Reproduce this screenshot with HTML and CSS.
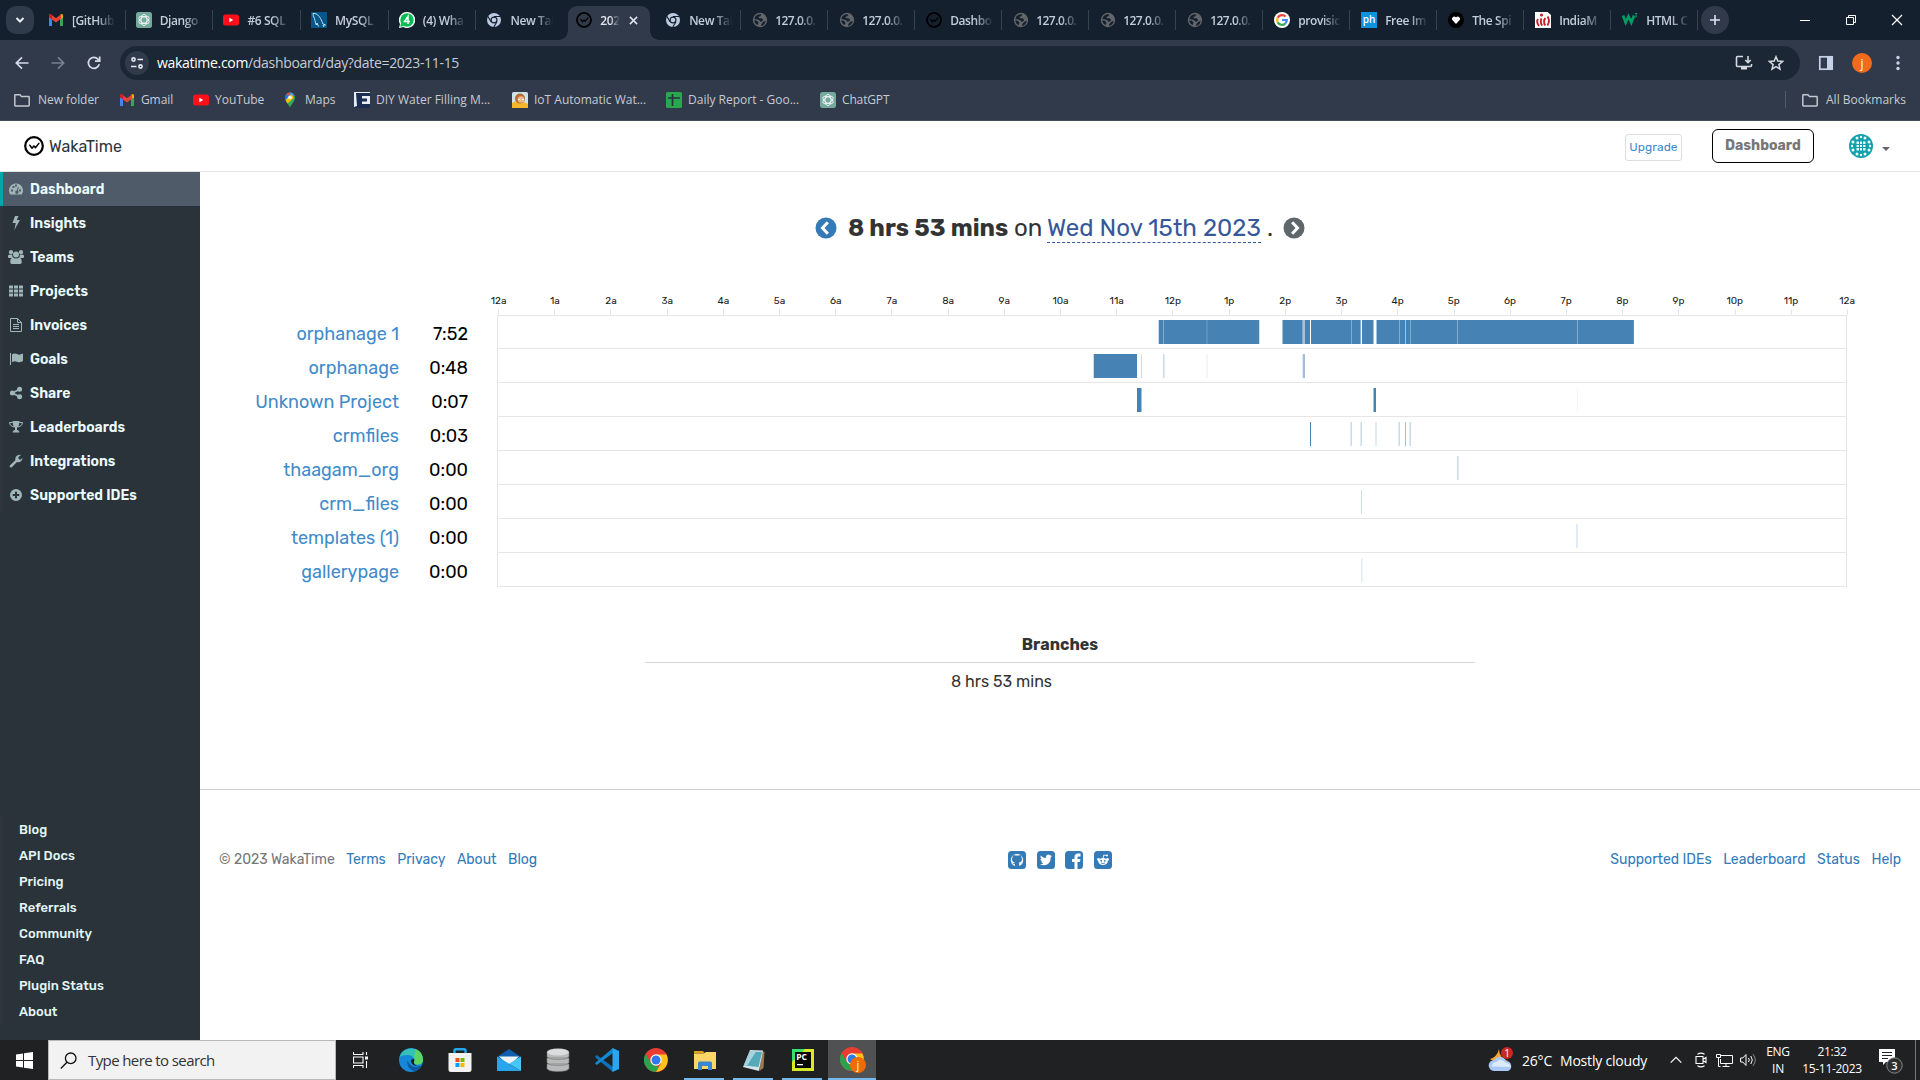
FILE: index.html
```html
<!DOCTYPE html>
<html lang="en">
<head>
<meta charset="utf-8">
<title>2023-11-15 - WakaTime</title>
<link rel="stylesheet" href="styles.css">
</head>
<body>
<svg class="defs" width="0" height="0" aria-hidden="true">
  <symbol id="gmail" viewBox="0 0 16 16"><path fill="#4285f4" d="M1 14V4l3 2.2V14z"/><path fill="#34a853" d="M12 14V6.2L15 4v10z"/><path fill="#fbbc04" d="M12 3l1.2-.8Q15 1.600 15 4v1.200L12 7.500z"/><path fill="#ea4335" d="M1 5.200V4Q1 1.600 2.800 2.200L8 6.200l5.200-4V6.600L8 10.600z"/><path fill="#c5221f" d="M1 5.200V4Q1 1.600 2.800 2.200L4 3v4.500z"/></symbol>
  <symbol id="gpt" viewBox="0 0 16 16"><rect width="16" height="16" rx="2.500" fill="#75a99c"/><g fill="none" stroke="#fff" stroke-width=".8"><ellipse cx="8" cy="8" rx="3" ry="5.600"/><ellipse cx="8" cy="8" rx="3" ry="5.600" transform="rotate(60 8 8)"/><ellipse cx="8" cy="8" rx="3" ry="5.600" transform="rotate(120 8 8)"/></g></symbol>
  <symbol id="youtube" viewBox="0 0 16 16"><rect y="2.500" width="16" height="11" rx="2.500" fill="#ff0f1a"/><path fill="#fff" d="M6.300 5.700v4.600L10.300 8z"/></symbol>
  <symbol id="mysql" viewBox="0 0 16 16"><path fill="#05578a" d="M0 0h16v16H0z"/><path fill="none" stroke="#d9edf5" stroke-width=".9" d="M2 1.500c3-.5 5.500 1.500 7.500 5 1.200 2 1.800 3.500 2 5l3 1.500-2.600.2 1.200 1.800M2 1.500c0 3 1.500 4 2 7 .4 2 .6 3 1.300 4.500l.7-2 1.500 3.500"/></symbol>
  <symbol id="whatsapp" viewBox="0 0 16 16"><path fill="#fff" d="M8 0a8 8 0 1 1-3.700 15L0 16l1-4A8 8 0 0 1 8 0z"/><circle cx="8" cy="8" r="6.700" fill="#00bd53"/><path d="M2 11l-.7 3.700L5 14z" fill="#00bd53"/><path fill="none" stroke="#fff" stroke-width="1.500" d="M9 12V4.500L5.500 9.500h5.500"/></symbol>
  <symbol id="newtab" viewBox="0 0 16 16"><circle cx="8" cy="8" r="7" fill="#bccbe3"/><circle cx="8" cy="8" r="3.500" fill="#15202e"/><circle cx="8" cy="8" r="2.300" fill="#bccbe3"/><path d="M8 4.500h6.500M5 9.600L1.800 4.200M11 9.700L7.800 15" stroke="#15202e" stroke-width="1.100"/></symbol>
  <symbol id="waka" viewBox="0 0 20 20"><circle cx="10" cy="10" r="8.800" fill="none" stroke="#000" stroke-width="2.200"/><path d="M5.800 9.200l2.300 3 1.800-2.300 1.500 1.900 3.500-4.400" fill="none" stroke="#000" stroke-width="1.500" stroke-linecap="round" stroke-linejoin="round"/></symbol>
  <symbol id="globe" viewBox="0 0 16 16"><circle cx="8" cy="8" r="7.200" fill="#62656a"/><path fill="#15202e" d="M3.500 4.300Q6 1.500 9.500 2.600L8.300 4.200l-1.800.6.300 1.500 2.900-.1 1.500 1.700-1.400 1.500-1.500.4-.9-1.600L5.200 7.500 2.300 7zM9.300 12.300l1.700-2.300 2.600-1.200c0 2.600-2 4.900-4.500 5.100zM2.300 8.300l2.500.5 1.700 1.700-.8 2.500C3.700 12.400 2.400 10.800 2.300 8.300z"/></symbol>
  <symbol id="google" viewBox="0 0 16 16"><circle cx="8" cy="8" r="8" fill="#fff"/><g fill="none" stroke-width="2.200"><path stroke="#ea4335" d="M11.600 4.600A4.900 4.900 0 0 0 3.700 5.700"/><path stroke="#fbbc05" d="M3.700 5.700a4.900 4.900 0 0 0 0 4.700"/><path stroke="#34a853" d="M3.700 10.400a4.900 4.900 0 0 0 7.500 1.200"/><path stroke="#4285f4" d="M11.200 11.600A4.900 4.900 0 0 0 12.800 8H8"/></g></symbol>
  <symbol id="ph" viewBox="0 0 16 16"><path fill="#0d92e0" d="M0 0h16v16H0z"/><text x="8" y="10.500" text-anchor="middle" class="ph-text">ph</text></symbol>
  <symbol id="heart" viewBox="0 0 16 16"><circle cx="8" cy="8" r="8" fill="#000"/><path fill="#fff" d="M8 12L4.300 8A2.200 2.200 0 0 1 8 5.500 2.200 2.200 0 0 1 11.700 8z"/></symbol>
  <symbol id="indiamart" viewBox="0 0 16 16"><path fill="#fff" d="M0 0h12.500L16 3v13H0z"/><circle cx="6.500" cy="3" r="1.600" fill="#c7202c"/><path d="M4 13.800Q.9 10 3 7M7.200 13.500Q4.800 10 6.500 6.500M10.200 13.500Q8 10 10.200 6M12.400 13.500q3-4.500.2-9" fill="none" stroke="#c7202c" stroke-width="1.900"/></symbol>
  <symbol id="w3" viewBox="0 0 16 16"><path fill="none" stroke="#059b65" stroke-width="2.700" d="M1 3.500l2.700 7 2.800-6 2.800 6 2.700-7"/><path d="M12.800 1.500h2.200l-1.200 1.700q2.400 1.600-.8 2.300" fill="none" stroke="#059b65"/></symbol>
  <symbol id="folder" viewBox="0 0 16 16"><path fill="none" stroke="#c3c7ce" stroke-width="1.500" d="M.8 13.200V3.200Q.8 2.700 1.400 2.700H6L7.500 4.600h7q.7 0 .7.700v7.900q0 .7-.7.700H1.500q-.7 0-.7-.7z"/></symbol>
  <symbol id="chrome" viewBox="0 0 24 24"><circle cx="12" cy="12" r="12" fill="#ea3d31"/><path fill="#2ba24c" d="M1.600 6L6.800 15 12 18l2.500.5L12 24A12 12 0 0 1 1.600 6z"/><path fill="#fcc31e" d="M22.400 6.500H12l5.200 8.500L12 24A12 12 0 0 0 22.400 6.500z"/><circle cx="12" cy="12" r="5.700" fill="#fff"/><circle cx="12" cy="12" r="4.500" fill="#3079ea"/></symbol>
</svg>

<div class="browser">
  <div class="tabs">
    <button class="tab-search"><svg width="14" height="14" viewBox="0 0 14 14"><path d="M3.500 5L7 8.500 10.500 5" fill="none" stroke="#e6ebf3" stroke-width="2"/></svg></button>
    <div class="tab tab-wide"><svg class="fav"><use href="#gmail"/></svg><span>[GitHub</span></div>
    <div class="tab tab-wide"><svg class="fav"><use href="#gpt"/></svg><span>Django</span></div>
    <div class="tab tab-wide"><svg class="fav"><use href="#youtube"/></svg><span>#6 SQL</span></div>
    <div class="tab tab-wide"><svg class="fav"><use href="#mysql"/></svg><span>MySQL</span></div>
    <div class="tab tab-wide"><svg class="fav"><use href="#whatsapp"/></svg><span>(4) Wha</span></div>
    <div class="tab tab-wide tab-before"><svg class="fav"><use href="#newtab"/></svg><span>New Tal</span></div>
    <div class="tab-active"><svg class="fav"><use href="#waka"/></svg><span>202</span><svg class="tab-close" viewBox="0 0 10 10"><path d="M1 1l8 8M9 1L1 9" stroke="#dfe5ef" stroke-width="1.700"/></svg></div>
    <div class="tab"><svg class="fav"><use href="#newtab"/></svg><span>New Tal</span></div>
    <div class="tab"><svg class="fav"><use href="#globe"/></svg><span class="ip">127.0.0.</span></div>
    <div class="tab"><svg class="fav"><use href="#globe"/></svg><span class="ip">127.0.0.</span></div>
    <div class="tab"><svg class="fav"><use href="#waka"/></svg><span>Dashbo</span></div>
    <div class="tab"><svg class="fav"><use href="#globe"/></svg><span class="ip">127.0.0.</span></div>
    <div class="tab"><svg class="fav"><use href="#globe"/></svg><span class="ip">127.0.0.</span></div>
    <div class="tab"><svg class="fav"><use href="#globe"/></svg><span class="ip">127.0.0.</span></div>
    <div class="tab"><svg class="fav"><use href="#google"/></svg><span>provisic</span></div>
    <div class="tab"><svg class="fav"><use href="#ph"/></svg><span>Free Im</span></div>
    <div class="tab"><svg class="fav"><use href="#heart"/></svg><span>The Spi</span></div>
    <div class="tab"><svg class="fav"><use href="#indiamart"/></svg><span>IndiaM</span></div>
    <div class="tab"><svg class="fav"><use href="#w3"/></svg><span>HTML C</span></div>
    <button class="new-tab"><svg width="12" height="12" viewBox="0 0 12 12"><path d="M6 1v10M1 6h10" stroke="#dfe5ef" stroke-width="1.600"/></svg></button>
    <div class="window-controls">
      <svg width="12" height="12" viewBox="0 0 12 12"><path d="M1 6.500h10" stroke="#fff"/></svg>
      <svg width="12" height="12" viewBox="0 0 12 12"><path d="M1.500 3.500h7v7h-7zM3.500 3.500v-2h7v7h-2" fill="none" stroke="#fff"/></svg>
      <svg width="12" height="12" viewBox="0 0 12 12"><path d="M1 1l10 10M11 1L1 11" stroke="#fff" stroke-width="1.200"/></svg>
    </div>
  </div>

  <div class="toolbar">
    <div class="nav-buttons">
      <svg width="16" height="16" viewBox="0 0 16 16"><path d="M14.500 8H2.500M8 2.300L2.300 8 8 13.700" fill="none" stroke="#d5dce8" stroke-width="1.700"/></svg>
      <svg width="16" height="16" viewBox="0 0 16 16"><path d="M1.500 8h12M8 2.300L13.700 8 8 13.700" fill="none" stroke="#76808e" stroke-width="1.700"/></svg>
      <svg width="16" height="16" viewBox="0 0 16 16"><path d="M13.200 9.300A5.500 5.500 0 1 1 12 4.200l1.500 1.600M13.700 1.500v4.700H9" fill="none" stroke="#d5dce8" stroke-width="1.700"/></svg>
    </div>
    <div class="omnibox">
      <span class="site-info"><svg width="14" height="14" viewBox="0 0 14 14"><g fill="none" stroke="#e4e9f1" stroke-width="1.600"><circle cx="3.500" cy="3.500" r="1.600"/><path d="M7.500 3.500H13M1 10.500h5.500"/><circle cx="10.500" cy="10.500" r="1.600"/></g></svg></span>
      <span class="url"><b>wakatime.com</b>/dashboard/day?date=2023-11-15</span>
      <svg class="install" width="18" height="16" viewBox="0 0 18 16"><path d="M8 1.500H2.500q-1 0-1 1v8q0 1 1 1h13q1 0 1-1V9M13 1v6M10.300 5L13 7.700 15.700 5" fill="none" stroke="#d5dae2" stroke-width="1.600"/><path d="M6 12h6v2.500H6z" fill="#d5dae2"/></svg>
      <svg class="star" width="16" height="16" viewBox="0 0 16 16"><path d="M8 1.800l1.800 4.300 4.700.4-3.600 3.100 1.100 4.500L8 11.700l-4 2.400 1.100-4.500L1.500 6.500l4.700-.4z" fill="none" stroke="#d5dae2" stroke-width="1.500"/></svg>
    </div>
    <div class="tools">
      <svg width="16" height="16" viewBox="0 0 16 16"><rect x="1.800" y="1.800" width="12.400" height="12.400" fill="none" stroke="#c5d3e8" stroke-width="1.700"/><path fill="#c5d3e8" d="M9 1.800h5.200v12.400H9z"/></svg>
      <span class="profile">j</span>
      <svg class="more" width="4" height="16" viewBox="0 0 4 16"><g fill="#c9d4e6"><circle cx="2" cy="2.500" r="1.700"/><circle cx="2" cy="8" r="1.700"/><circle cx="2" cy="13.500" r="1.700"/></g></svg>
    </div>
  </div>

  <div class="bookmarks">
    <span class="bm bm-newfolder"><svg class="fav"><use href="#folder"/></svg>New folder</span>
    <span class="bm bm-gmail"><svg class="fav"><use href="#gmail"/></svg>Gmail</span>
    <span class="bm bm-youtube"><svg class="fav"><use href="#youtube"/></svg>YouTube</span>
    <span class="bm bm-maps"><svg class="fav" viewBox="0 0 16 16"><path fill="#34a853" d="M8 16C7.500 13 3 9.500 3 5.500a5 5 0 0 1 10 0C13 9.500 8.500 13 8 16z"/><path fill="#4285f4" d="M8 .5a5 5 0 0 1 4.600 3L6 11 3 6z"/><path fill="#ea4335" d="M3.800 2.500A5 5 0 0 1 8 .5L6 4z"/><path fill="#fbbc04" d="M3.500 8l6-6L12 6 5.500 11.500z"/><path fill="#1a73e8" d="M3.800 2.500A5 5 0 0 0 3.500 8L6 4z"/><circle cx="8" cy="5.500" r="1.800" fill="#fff"/></svg>Maps</span>
    <span class="bm bm-diy"><svg class="fav" viewBox="0 0 16 16"><path fill="#e9edf4" d="M0 0h16v16H0z"/><path fill="#1b2d52" d="M2 1h14v3H8v2.500h5v3H8V12h8v4H0v-1l3-1z"/></svg>DIY Water Filling M...</span>
    <span class="bm bm-iot"><svg class="fav" viewBox="0 0 16 16"><rect width="16" height="16" rx="1.500" fill="#cfe4ea"/><path fill="#f6b62c" d="M0 16V11l4-2 8 1 4 2v4z"/><circle cx="8" cy="6.500" r="5" fill="#b46b32"/><circle cx="9" cy="7.500" r="3.300" fill="#efb98a"/><path fill="#fff" d="M6 7h2v1H6zM10 7h2v1h-2z"/></svg>IoT Automatic Wat...</span>
    <span class="bm bm-daily"><svg class="fav" viewBox="0 0 16 16"><rect width="16" height="16" rx="1.500" fill="#29a84e"/><path d="M2 6h12M6.500 2v12" stroke="#26313c" stroke-width="1.700"/></svg>Daily Report - Goo...</span>
    <span class="bm bm-gpt"><svg class="fav"><use href="#gpt"/></svg>ChatGPT</span>
    <span class="bm bm-all"><svg class="fav"><use href="#folder"/></svg>All Bookmarks</span>
  </div>
</div>

<header class="site-header">
  <a class="brand"><svg width="20" height="20"><use href="#waka"/></svg><span>WakaTime</span></a>
  <a class="upgrade">Upgrade</a>
  <a class="dash-button">Dashboard</a>
  <svg class="avatar" width="24" height="24" viewBox="0 0 24 24"><circle cx="12" cy="12" r="12" fill="#12a0ad"/><g fill="#e8fbfa"><path d="M7.500 7.500h2.500V10H7.500zM11 7.500h2V10h-2zM14 7.500h2.500V10H14zM7.500 11h2.500v2H7.500zM11 11h2v2h-2zM14 11h2.500v2H14zM7.500 14h2.500v2.500H7.500zM11 14h2v2.500h-2zM14 14h2.500v2.500H14z"/><circle cx="8" cy="4" r="1.500"/><circle cx="12" cy="3" r="1.200"/><circle cx="16" cy="4" r="1.500"/><circle cx="8" cy="20" r="1.500"/><circle cx="12" cy="21" r="1.200"/><circle cx="16" cy="20" r="1.500"/><circle cx="4" cy="8" r="1.500"/><circle cx="3" cy="12" r="1.200"/><circle cx="4" cy="16" r="1.500"/><circle cx="20" cy="8" r="1.500"/><circle cx="21" cy="12" r="1.200"/><circle cx="20" cy="16" r="1.500"/></g></svg>
  <svg class="caret" width="8" height="4" viewBox="0 0 8 4"><path fill="#666" d="M0 0h8L4 4z"/></svg>
</header>

<div class="page">
  <aside class="sidebar">
    <nav class="menu">
      <a class="current"><svg viewBox="0 0 14 14"><path fill-rule="evenodd" d="M7 1.500A7 7 0 0 0 1.100 12.200q.2.300.5.300h10.800q.3 0 .5-.3A7 7 0 0 0 7 1.500zM2 7.500h2v2H2zm1.500-3.500h2v2h-2zM6 2.500h2v2H6zM8.800 5l1 .3-1 3.500a1.600 1.600 0 1 1-1-.3zM10 7.500h2v2h-2z"/></svg><span>Dashboard</span></a>
      <a><svg viewBox="0 0 14 14"><path d="M6 0h3.500L7.800 4H11L5.300 14 6.800 7H3.500z"/></svg><span>Insights</span></a>
      <a><svg class="wide" viewBox="0 0 16 14"><circle cx="3" cy="2.200" r="2.100"/><circle cx="13" cy="2.200" r="2.100"/><circle cx="8" cy="4.500" r="3"/><path d="M0 5.500q1-1.500 4.300-.8-.3 2 .8 3.300H1Q0 8 0 7zM16 5.500q-1-1.500-4.300-.8.3 2-.8 3.300H15q1 0 1-1zM2.300 12.500Q2 8 5 7.500q3 2 6 0 3 .5 2.700 5 0 1.500-1.700 1.500H4q-1.700 0-1.700-1.500z"/></svg><span>Teams</span></a>
      <a><svg viewBox="0 0 14 14"><path d="M0 1.500h4v3H0zM5 1.500h4v3H5zM10 1.500h4v3h-4zM0 5.500h4v3H0zM5 5.500h4v3H5zM10 5.500h4v3h-4zM0 9.500h4v3H0zM5 9.500h4v3H5zM10 9.500h4v3h-4z"/></svg><span>Projects</span></a>
      <a><svg viewBox="0 0 14 14"><path class="line" d="M1.500.5h7l4 4v9h-11zM8.500.5v4h4M4 6.500h6M4 8.500h6M4 10.500h6"/></svg><span>Invoices</span></a>
      <a><svg viewBox="0 0 14 14"><path d="M1 1h1v12H1zM3 2.500q2.500-1.700 5-.4 2.500 1.300 6-.6v7.500q-3.500 2-6 .7-2.500-1.300-5 .6z"/></svg><span>Goals</span></a>
      <a><svg viewBox="0 0 14 14"><circle cx="3.400" cy="7" r="2.500"/><circle cx="10.600" cy="3.300" r="2.500"/><circle cx="10.600" cy="10.700" r="2.500"/><path class="line thick" d="M10.600 3.300L3.400 7l7.200 3.700"/></svg><span>Share</span></a>
      <a><svg viewBox="0 0 14 14"><path d="M3.500 1h7q0 5-2.500 6.800V10q2.500.3 2.500 2.500h-7Q3.500 10.300 6 10V7.800Q3.500 6 3.500 1z"/><path class="line" d="M3.500 2.500h-3Q.7 6 5 7M10.500 2.500h3Q13.300 6 9 7"/></svg><span>Leaderboards</span></a>
      <a><svg viewBox="0 0 14 14"><path d="M.8 11.500L6.300 6.200Q5.900 3 8.500 1.300 10.200.4 12 1L9.500 3v1.800l1.700.9 2.300-1.600Q13.500 6 12 7.300q-1.700 1.300-4 .7L2.800 13.300q-.9.600-1.700-.1-.8-.9-.3-1.700z"/></svg><span>Integrations</span></a>
      <a><svg viewBox="0 0 14 14"><path fill-rule="evenodd" d="M7 1a6 6 0 1 0 0 12A6 6 0 0 0 7 1zM6 3.700h2V6h2.300v2H8v2.300H6V8H3.700V6H6z"/></svg><span>Supported IDEs</span></a>
    </nav>
    <nav class="links">
      <a>Blog</a><a>API Docs</a><a>Pricing</a><a>Referrals</a><a>Community</a><a>FAQ</a><a>Plugin Status</a><a>About</a>
    </nav>
  </aside>

  <main class="content">
    <h1 class="day">
      <svg class="step" viewBox="0 0 22 22"><circle cx="11" cy="11" r="10.500" fill="#337ab7"/><path d="M12.800 5.300L7.500 11l5.300 5.700" fill="none" stroke="#fff" stroke-width="3"/></svg>
      <strong>8 hrs 53 mins</strong><span class="on">on</span><a class="date">Wed Nov 15th 2023</a><span class="dot">.</span>
      <svg class="step" viewBox="0 0 22 22"><circle cx="11" cy="11" r="10.500" fill="#60676b"/><path d="M9.200 5.300L14.500 11l-5.300 5.700" fill="none" stroke="#fff" stroke-width="3"/></svg>
    </h1>

    <section class="timeline">
      <div class="projects">
        <div><a>orphanage 1</a><span>7:52</span></div>
        <div><a>orphanage</a><span>0:48</span></div>
        <div><a>Unknown Project</a><span>0:07</span></div>
        <div><a>crmfiles</a><span>0:03</span></div>
        <div><a>thaagam_org</a><span>0:00</span></div>
        <div><a>crm_files</a><span>0:00</span></div>
        <div><a>templates (1)</a><span>0:00</span></div>
        <div><a>gallerypage</a><span>0:00</span></div>
      </div>
      <div class="chart">
        <div class="hours"><span>12a</span><span>1a</span><span>2a</span><span>3a</span><span>4a</span><span>5a</span><span>6a</span><span>7a</span><span>8a</span><span>9a</span><span>10a</span><span>11a</span><span>12p</span><span>1p</span><span>2p</span><span>3p</span><span>4p</span><span>5p</span><span>6p</span><span>7p</span><span>8p</span><span>9p</span><span>10p</span><span>11p</span><span>12a</span></div>
        <svg class="plot" width="1351" height="278" viewBox="497 309 1351 278" shape-rendering="crispEdges">
          <g fill="#e6e6e6">
            <path d="M497 315h1350v1H497zM497 348h1350v1H497zM497 382h1350v1H497zM497 416h1350v1H497zM497 450h1350v1H497zM497 484h1350v1H497zM497 518h1350v1H497zM497 552h1350v1H497zM497 586h1350v1H497zM497 315h1v272h-1zM1846 315h1v272h-1z"/>
            <path d="M498 309h1v6h-1zM554 309h1v6h-1zM610 309h1v6h-1zM667 309h1v6h-1zM723 309h1v6h-1zM779 309h1v6h-1zM835 309h1v6h-1zM891 309h1v6h-1zM948 309h1v6h-1zM1004 309h1v6h-1zM1060 309h1v6h-1zM1116 309h1v6h-1zM1172 309h1v6h-1zM1229 309h1v6h-1zM1285 309h1v6h-1zM1341 309h1v6h-1zM1397 309h1v6h-1zM1454 309h1v6h-1zM1510 309h1v6h-1zM1566 309h1v6h-1zM1622 309h1v6h-1zM1678 309h1v6h-1zM1735 309h1v6h-1zM1791 309h1v6h-1zM1847 309h1v6h-1z"/>
          </g>
          <g fill="#4682b4">
            <path d="M1159 320h100v24h-100zM1283 320h351v24h-351zM1094 354h43v24h-43zM1137 388h4v24h-4zM1374 388h2v24h-2zM1310 422h1v24h-1z"/>
            <path opacity=".5" d="M1282 320h1v24h-1zM1303 354h2v24h-2zM1141 388h1v24h-1zM1373 388h1v24h-1zM1405 422h1v24h-1z"/>
            <path opacity=".28" d="M1259 320h1v24h-1zM1158 320h1v24h-1zM1093 354h1v24h-1zM1141 354h1v24h-1zM1163 354h1v24h-1zM1351 422h1v24h-1zM1361 422h1v24h-1zM1399 422h1v24h-1zM1410 422h1v24h-1zM1457 456h1v24h-1zM1361 490h1v24h-1z"/>
            <path opacity=".16" d="M1302 354h1v24h-1zM1164 354h1v24h-1zM1350 422h1v24h-1zM1360 422h1v24h-1zM1375 422h2v24h-2zM1398 422h1v24h-1zM1409 422h1v24h-1zM1458 456h1v24h-1zM1576 524h2v24h-2zM1361 558h1v24h-1z"/>
            <path opacity=".07" d="M1206 354h2v24h-2zM1577 388h1v24h-1zM1362 558h1v24h-1z"/>
          </g>
          <g fill="#fff">
            <path d="M1310 320h1v24h-1zM1361 320h1v24h-1zM1374 320h2v24h-2z"/>
            <path opacity=".5" d="M1303 320h2v24h-2zM1373 320h1v24h-1zM1376 320h1v24h-1zM1405 320h1v24h-1z"/>
            <path opacity=".33" d="M1163 320h1v24h-1zM1302 320h1v24h-1zM1351 320h1v24h-1zM1360 320h1v24h-1zM1399 320h1v24h-1zM1410 320h1v24h-1zM1457 320h1v24h-1zM1577 320h1v24h-1z"/>
            <path opacity=".12" d="M1206 320h2v24h-2zM1633 320h1v24h-1z"/>
          </g>
        </svg>
      </div>
    </section>

    <section class="branches">
      <h2>Branches</h2>
      <p>8 hrs 53 mins</p>
    </section>

    <footer class="footer">
      <div class="foot-left"><span>© 2023 WakaTime</span><a>Terms</a><a>Privacy</a><a>About</a><a>Blog</a></div>
      <div class="social">
        <svg viewBox="0 0 18 18"><rect width="18" height="18" rx="3.500"/><path fill="#fff" d="M7 15v-2q-2 .3-2.500-1.500 1.500 1.200 2.700.3Q4 11 4 8.200q0-1.200.8-2.200-.3-1.200.2-2.200 1 0 2.200.8 1.800-.4 3.600 0Q12 3.800 13 3.800q.5 1 .2 2.200.8 1 .8 2.200 0 2.800-3.200 3.600.5.600.4 1.400V15q4-1.700 4-6A6.200 6.200 0 1 0 7 15z"/></svg>
        <svg viewBox="0 0 18 18"><rect width="18" height="18" rx="3.500"/><path fill="#fff" d="M15 5.300l-1.300 1.200Q13.500 14 7 14.300q-2.300 0-4-1 2.200 0 3.500-1-1.800-.2-2.300-1.800h1.100Q3.300 9.800 3.400 7.700l1.100.3Q2.800 6.500 3.800 4.500q2.300 2.500 5.100 2.600-.4-2.900 2.200-3.500 1.100-.1 2 .8l1.500-.6-.9 1.400z"/></svg>
        <svg viewBox="0 0 18 18"><rect width="18" height="18" rx="3.500"/><path fill="#fff" d="M9.500 18v-7H7V8h2.500V6q0-3.500 3.500-3.500h2.500v3H14q-1.500 0-1.500 1.200V8h2.900l-.4 3h-2.500v7z"/></svg>
        <svg viewBox="0 0 18 18"><rect width="18" height="18" rx="3.500"/><ellipse cx="9" cy="10.500" rx="4.700" ry="3.500" fill="#fff"/><circle cx="4.500" cy="8.500" r="1.400" fill="#fff"/><circle cx="13.500" cy="8.500" r="1.400" fill="#fff"/><path d="M9 7.200L9.800 4l3 .6" fill="none" stroke="#fff" stroke-width=".9"/><circle cx="13" cy="4.600" r="1" fill="#fff"/><circle cx="7.200" cy="9.800" r=".9"/><circle cx="10.800" cy="9.800" r=".9"/><path d="M7 12q2 1.200 4 0" class="smile"/></svg>
      </div>
      <div class="foot-right"><a>Supported IDEs</a><a>Leaderboard</a><a>Status</a><a>Help</a></div>
    </footer>
  </main>
</div>

<div class="taskbar">
  <div class="start"><svg width="17" height="17" viewBox="0 0 17 17"><path fill="#fff" d="M0 2.400l7-1V8H0zM8 1.200L17 0v8H8zM0 9h7v6.600l-7-1zM8 9h9v8l-9-1.200z"/></svg></div>
  <div class="search"><svg width="17" height="17" viewBox="0 0 17 17"><circle cx="10.700" cy="6.300" r="5.300" fill="none" stroke="#111" stroke-width="1.300"/><path d="M7 10.200L.8 16.400" stroke="#111" stroke-width="1.400"/></svg><span>Type here to search</span></div>
  <div class="apps">
    <div class="app"><svg width="16" height="16" viewBox="0 0 16 16"><path d="M.5 0v2.500h9.500V0M.5 5h9.500v6H.5zM.5 16v-2.500h9.500V16M13.500 0v3M13.500 9v7" fill="none" stroke="#fff" stroke-width="1.100"/><path fill="#fff" d="M12 4.500h3v3h-3z"/></svg></div>
    <div class="app"><svg width="24" height="24" viewBox="0 0 24 24"><circle cx="12" cy="12" r="12" fill="#1787d8"/><path fill="#35c1b5" d="M.5 9A12 12 0 0 1 24 12q-.5 5-6 4.500-3-.5-3-2.500Q16 8 10 7 4 6.500.5 9z"/><path fill="#5bd663" d="M16 .7A12 12 0 0 1 24 12q-.5 5-6 4.500-3-.5-3-2.500 2-3-.5-5.500Q17 5 16 .7z"/><path fill="#0c59a4" d="M8.500 12Q7 20 15 23.500q5-1.500 7-5.500-6 2.500-10-.5Q9 15 8.500 12z"/><path fill="#202122" d="M14.200 10.500q-3 1-2 4 2 4.500 10.200 3.500-6 .5-7.400-2.500-.5-1.700.5-3.500z"/></svg></div>
    <div class="app"><svg width="24" height="24" viewBox="0 0 24 24"><path d="M6.500 6V2.500q0-1.300 1.300-1.300h8.400q1.300 0 1.300 1.300V6" fill="none" stroke="#22a7ea" stroke-width="2.400"/><path fill="#f2f2f2" d="M.5 5h23v16.500q0 2.500-2.500 2.500H3Q.5 24 .5 21.500z"/><path fill="#f04e23" d="M7.500 10h4v4h-4z"/><path fill="#7eb900" d="M12.500 10h4v4h-4z"/><path fill="#00a3ee" d="M7.500 15h4v4h-4z"/><path fill="#ffb800" d="M12.500 15h4v4h-4z"/></svg></div>
    <div class="app"><svg width="24" height="24" viewBox="0 0 24 24"><path fill="#0f5eb0" d="M0 9L12 1l12 8v4H0z"/><path fill="#eef3f8" d="M2 8.500h20L14 16h-4z"/><path fill="#2aa4ea" d="M0 8.500L24 23H0z"/><path fill="#45c8f5" d="M24 8.500L12 15.700 24 23z"/></svg></div>
    <div class="app"><svg width="24" height="24" viewBox="0 0 24 24"><g fill="#b9b9b9" stroke="#777" stroke-width=".6"><path d="M1 16v4.500Q2 23.500 12 23.500t11-3V16zM1 10v4.500q1 3 11 3t11-3V10zM1 4v4.500q1 3 11 3t11-3V4z"/></g><ellipse cx="12" cy="4" rx="11" ry="3.500" fill="#dcdcdc"/></svg></div>
    <div class="app"><svg width="24" height="24" viewBox="0 0 24 24"><path fill="#0d72b9" d="M0 8.500l1.700-1.500L18 19v5L1.500 10.500z"/><path fill="#1389d2" d="M0 15.500L1.700 17 18 5V0L1.500 13.700z"/><path fill="#2ba5ee" d="M17.500 0L24 3v18l-6.500 3z"/></svg></div>
    <div class="app"><svg width="24" height="24"><use href="#chrome"/></svg></div>
    <div class="app open"><svg width="24" height="24" viewBox="0 0 24 24"><path fill="#e0a21b" d="M1 3h9l2 2.500H1z"/><path fill="#fbd568" d="M1 5.500h10L13 4h10v17H1z"/><path fill="#3588d5" d="M5 22v-7q0-1.500 1.500-1.500h11Q19 13.500 19 15v7h-4v-4H9v4z"/></svg></div>
    <div class="app open"><svg width="24" height="24" viewBox="0 0 24 24"><path fill="#9a7b4f" d="M20 3l2.500 1-1 16-4 3z"/><path fill="#d7e4e7" d="M8 2l13 .5L17 23 1 19z"/><path fill="#56a9b9" d="M8 3.500l12 .5-3.500 15L2 17.500z"/><path fill="#a4d5de" d="M8 3.500l6 .3-9 14L2 17.500z"/></svg></div>
    <div class="app open"><svg width="24" height="24" viewBox="0 0 24 24"><path fill="#d8ea26" d="M1 1h22v22H1z"/><path fill="#38e06b" d="M1 1h13L1 14z"/><path fill="#080808" d="M4 4h16v16H4z"/><text x="5.200" y="12" class="pc-text">PC</text><path fill="#fff" d="M6 16h6v1.300H6z"/></svg></div>
    <div class="app open focused"><svg width="28" height="26" viewBox="-2 0 28 26"><use href="#chrome" width="24" height="24"/><circle cx="18" cy="18" r="8" fill="#ef6c00"/><text x="18" y="22" text-anchor="middle" class="j-text">j</text></svg></div>
  </div>
  <div class="tray">
    <div class="weather"><svg width="26" height="26" viewBox="0 0 26 26"><path fill="#f7a72e" d="M11 2q0 9 9 12-12 3-18-2Q9 10 11 2z"/><path fill="#a9c8f5" d="M6 24a5.500 5.500 0 0 1 .3-11 6.500 6.500 0 0 1 11.700 1A5.200 5.200 0 0 1 20 24z"/><path fill="#dceafd" d="M4 19.500a4 4 0 0 1 4.500-4.500 5 5 0 0 1 8.500.5q5 .5 6 4.500z"/><circle cx="19" cy="6" r="6" fill="#c92a20"/><text x="19" y="9.500" text-anchor="middle" class="w-text">1</text></svg><span class="temp">26°C</span><span>Mostly cloudy</span></div>
    <svg class="up" width="12" height="8" viewBox="0 0 12 8"><path d="M.7 6.700L6 1.400l5.300 5.300" fill="none" stroke="#fff" stroke-width="1.200"/></svg>
    <svg class="meet" width="12" height="16" viewBox="0 0 12 16"><path d="M1 4.500h7v7H1zM8.500 7l2.500-1.500v5L8.500 9M2.500 2.300Q6 0 9.500 2.300M2.500 13.700Q6 16 9.500 13.700" fill="none" stroke="#fff" stroke-width="1.100"/></svg>
    <svg class="net" width="17" height="14" viewBox="0 0 17 14"><path d="M5 2.500h11.500v8H4.500V6M10 10.500v3M6.500 13.500h7M.5 1.500h4v3h-4zM2.500 4.500v9h2" fill="none" stroke="#fff"/></svg>
    <svg class="vol" width="17" height="14" viewBox="0 0 17 14"><path d="M.6 5h2.200L6 1.500v11L2.800 9H.6zM8.500 5q1.500 2 0 4M10.800 3q3 4 0 8" fill="none" stroke="#fff"/><path d="M13 1.200q4.500 5.800 0 11.600" fill="none" stroke="#8b8b8b"/></svg>
    <div class="lang"><span>ENG</span><span>IN</span></div>
    <div class="clock"><span>21:32</span><span>15-11-2023</span></div>
    <svg class="notes" width="26" height="26" viewBox="0 0 26 26"><path fill="#fff" d="M1 1h16v13H8l-3 3v-3H1z"/><path d="M4 4.500h10M4 7.500h10M4 10.500h6" stroke="#222"/><circle cx="16.500" cy="17.500" r="7.700" fill="#2b2d2e" stroke="#888"/><text x="16.500" y="21.500" text-anchor="middle" class="n-text">3</text></svg>
    <i class="peek"></i>
  </div>
</div>
</body>
</html>
```
FILE: styles.css
```css
* { box-sizing: border-box; }
body { margin: 0; width: 1920px; height: 1080px; overflow: hidden; display: flex; flex-direction: column; background: #fff; font-family: Rubik, Roboto, sans-serif; color: #333; }
svg { display: block; flex: none; }
.defs { position: absolute; }
button { border: 0; padding: 0; }

/* Browser chrome */
.browser { height: 121px; flex: none; background: #303a4a; border-bottom: 1px solid #434c59; font: 500 12px "Open Sans", "Noto Sans", sans-serif; color: #c7cbd2; }
.tabs { height: 40px; display: flex; align-items: center; background: #15202e; padding-left: 6px; }
.tab-search { width: 28px; height: 28px; border-radius: 10px; background: #2f3a4a; display: grid; place-items: center; margin-right: 4px; }
.fav { width: 16px; height: 16px; flex: none; }
.tab { width: 87px; height: 20px; display: flex; align-items: center; padding-left: 11px; border-right: 1px solid #38424f; flex: none; }
.tab-wide { width: 87.700px; padding-left: 10px; }
.tab-before { border-color: transparent; }
.tab span { margin-left: 8px; width: 45px; overflow: hidden; white-space: nowrap; font-weight: 600; letter-spacing: -.4px; color: #c4cdda; -webkit-mask-image: linear-gradient(90deg, #000 55%, transparent 96%); mask-image: linear-gradient(90deg, #000 55%, transparent 96%); }
.tab span.ip { letter-spacing: -.5px; margin-left: 7px; }
.tab-active { position: relative; width: 82px; height: 34px; margin: 6px 4px 0; flex: none; background: #303a4a; border-radius: 9px 9px 0 0; display: flex; align-items: center; padding: 0 0 6px 8px; color: #e4e7ec; }
.tab-active::before, .tab-active::after { content: ""; position: absolute; bottom: 0; width: 9px; height: 9px; }
.tab-active::before { left: -9px; background: radial-gradient(circle at 0 0, transparent 8.500px, #303a4a 9px); }
.tab-active::after { right: -9px; background: radial-gradient(circle at 100% 0, transparent 8.500px, #303a4a 9px); }
.tab-active span { margin-left: 8px; width: 20px; overflow: hidden; font-weight: 600; letter-spacing: -.3px; -webkit-mask-image: linear-gradient(90deg, #000 50%, transparent); mask-image: linear-gradient(90deg, #000 50%, transparent); }
.tab-close { width: 9px; height: 9px; margin-left: 9px; }
.new-tab { width: 28px; height: 28px; border-radius: 50%; background: #303a4a; display: grid; place-items: center; margin-left: 3px; }
.window-controls { display: flex; gap: 34px; margin-left: 70px; }
.ph-text { font: 600 10px "Open Sans", sans-serif; fill: #fff; }
.toolbar { height: 46px; display: flex; align-items: center; background: #303a4a; }
.nav-buttons { display: flex; gap: 20px; width: 120px; padding-left: 14px; }
.omnibox { width: 1680px; height: 34px; border-radius: 17px; background: #1c2735; display: flex; align-items: center; padding-left: 5px; }
.site-info { width: 24px; height: 24px; border-radius: 50%; background: #303a4a; display: grid; place-items: center; }
.url { margin: 0 0 1px 8px; font-size: 14px; font-weight: 400; letter-spacing: -.32px; color: #c6ccd5; }
.url b { font-weight: 400; color: #fff; }
.install { margin-left: auto; }
.star { margin: 0 16px 0 15px; }
.tools { display: flex; align-items: center; gap: 18px; padding-left: 18px; }
.profile { width: 20px; height: 20px; border-radius: 50%; background: #f26b1d; color: #fff; display: grid; place-items: center; font-size: 12px; }
.more { margin-left: 6px; }
.bookmarks { height: 28px; display: flex; align-items: center; padding: 0 14px 1px; }
.bm { display: flex; align-items: center; gap: 7px; white-space: nowrap; }
.bm-newfolder { width: 105px; gap: 8px; letter-spacing: -.05px; }
.bm-gmail { width: 74px; gap: 6px; letter-spacing: -.1px; }
.bm-youtube { width: 89px; gap: 6px; }
.bm-maps { width: 72px; }
.bm-diy { width: 158px; gap: 6px; }
.bm-iot { width: 154px; gap: 6px; }
.bm-daily { width: 154px; gap: 6px; }
.bm-gpt { gap: 6px; letter-spacing: -.15px; }
.bm-all { margin-left: auto; padding-left: 16px; border-left: 1px solid #505b69; gap: 8px; }

/* Site header */
.site-header { height: 51px; flex: none; display: flex; align-items: center; border-bottom: 1px solid #e4e4e4; padding-left: 24px; }
.brand { display: flex; align-items: center; gap: 5px; font-size: 16px; font-weight: 450; color: #2b363c; }
.upgrade { margin-left: auto; width: 57px; height: 27px; border: 1px solid #ddd; border-radius: 3px; display: grid; place-items: center; font-size: 12px; letter-spacing: .1px; color: #428bca; margin-top: 2px; }
.dash-button { width: 102px; height: 34px; margin-left: 30px; border: 1.500px solid #000; border-radius: 6px; display: grid; place-items: center; font-size: 14px; font-weight: 700; color: #777; padding-bottom: 2px; }
.avatar { margin-left: 35px; }
.caret { margin: 5px 30px 0 9px; }

/* Sidebar */
.page { display: flex; height: 868px; flex: none; }
.sidebar { width: 200px; background: #293339; display: flex; flex-direction: column; justify-content: space-between; }
.menu a { height: 34px; display: flex; align-items: center; border-left: 3px solid #2e353d; padding-left: 5px; font-size: 14px; font-weight: 600; color: #ebfbfb; }
.menu a.current { background: #4f5b69; border-color: #00a8ab; }
.menu span { padding-top: 1px; }
.menu svg { width: 14px; height: 14px; margin: 0 7px 0 1px; fill: #a0b6b6; }
.menu svg.wide { width: 16px; margin: 0 6px 0 0; }
.menu .line { fill: none; stroke: #a0b6b6; }
.menu .thick { stroke-width: 1.600; }
.links { border-left: 3px solid #2e353d; padding: 0 0 0 16px; margin-bottom: 16px; }
.links a { display: flex; align-items: center; height: 26px; padding-top: 1px; font-size: 13px; font-weight: 500; color: #e2f6f6; letter-spacing: .03px; }

/* Day view */
.content { width: 1720px; display: flex; flex-direction: column; }
.day { height: 44px; margin: 34px 0 0; padding-left: 615px; display: flex; align-items: center; font-size: 24px; font-weight: 400; white-space: nowrap; }
.step { width: 22px; height: 22px; }
.day strong { margin-left: 11px; width: 166px; }
.day .on { width: 33px; }
.day .date { width: 214px; color: #365899; letter-spacing: .05px; border-bottom: 1px dashed #365899; line-height: 28px; margin-top: 1px; }
.dot { margin-left: 6px; width: 16px; }
.timeline { display: flex; margin-top: 42px; height: 295px; }
.projects { width: 297px; padding-top: 25px; }
.projects div { height: 34px; display: flex; align-items: center; justify-content: flex-end; font-size: 18px; color: #428bca; }
.projects span { width: 69px; text-align: right; margin-right: 29px; color: #000; }
.hours { height: 17px; display: flex; margin-left: -26.500px; font-size: 10px; line-height: 18px; color: #222; }
.hours span { width: 56.200px; flex: none; text-align: center; }
.branches { margin: 42px 0 0 445px; width: 830px; }
.branches h2 { margin: 0; height: 34px; padding-bottom: 2px; display: grid; place-items: center; font-size: 16px; border-bottom: 1px solid #d5d5d5; }
.branches p { margin: 0; padding-left: 306px; line-height: 38px; font-size: 16px; }
.footer { margin-top: 88px; border-top: 1px solid #ccc; height: 140px; display: flex; align-items: center; padding: 0 19px; font-size: 14px; color: #337ab7; }
.foot-left, .foot-right { width: 600px; display: flex; gap: 11.500px; white-space: nowrap; }
.foot-left span { color: #777; }
.foot-right { justify-content: flex-end; }
.social { flex: 1; display: flex; justify-content: center; gap: 10.600px; }
.social svg { width: 18px; height: 18px; fill: #337ab7; }
.smile { fill: none; stroke: #337ab7; stroke-width: .8; }

/* Taskbar */
.taskbar { height: 40px; flex: none; display: flex; background: #202122; color: #fff; font-family: "Open Sans", "Noto Sans", sans-serif; }
.start { width: 48px; display: grid; place-items: center; }
.search { width: 288px; background: #f2f2f2; border: 1px solid #b9b9b9; display: flex; align-items: center; gap: 11px; padding-left: 11px; font-size: 15px; letter-spacing: -.75px; color: #333; }
.search { letter-spacing: -.6px; }
.apps { display: flex; }
.app { position: relative; width: 49px; display: grid; place-items: center; }
.app:first-child { margin-right: 1px; }
.open::after { content: ""; position: absolute; left: 4px; bottom: 0; width: 40px; height: 2px; background: #76b9ed; }
.focused { width: 48px; margin-left: 1px; background: #505152; }
.focused::after { left: 0; width: 48px; }
.pc-text { font: 700 8.500px "Open Sans", sans-serif; fill: #fff; }
.j-text { font: 11px "Open Sans", sans-serif; fill: #fff; }
.w-text { font: 10px "Open Sans", sans-serif; fill: #fff; }
.n-text { font: 600 11px "Open Sans", sans-serif; fill: #fff; }
.tray { margin-left: auto; display: flex; align-items: center; }
.weather { display: flex; align-items: center; font-size: 14px; white-space: nowrap; width: 182px; letter-spacing: -.2px; }
.temp { margin-left: 8px; width: 38px; }
.meet { margin-left: 13px; }
.net { margin-left: 9px; }
.vol { margin-left: 7px; }
.lang { width: 42px; display: flex; flex-direction: column; align-items: center; font-size: 12px; line-height: 17px; letter-spacing: -.3px; }
.clock { width: 66px; display: flex; flex-direction: column; align-items: center; font-size: 12px; line-height: 17px; letter-spacing: -.3px; white-space: nowrap; }
.notes { margin: 2px 0 0 13px; }
.peek { width: 1px; height: 40px; background: #777; margin: 0 4px 0 11px; }
```
